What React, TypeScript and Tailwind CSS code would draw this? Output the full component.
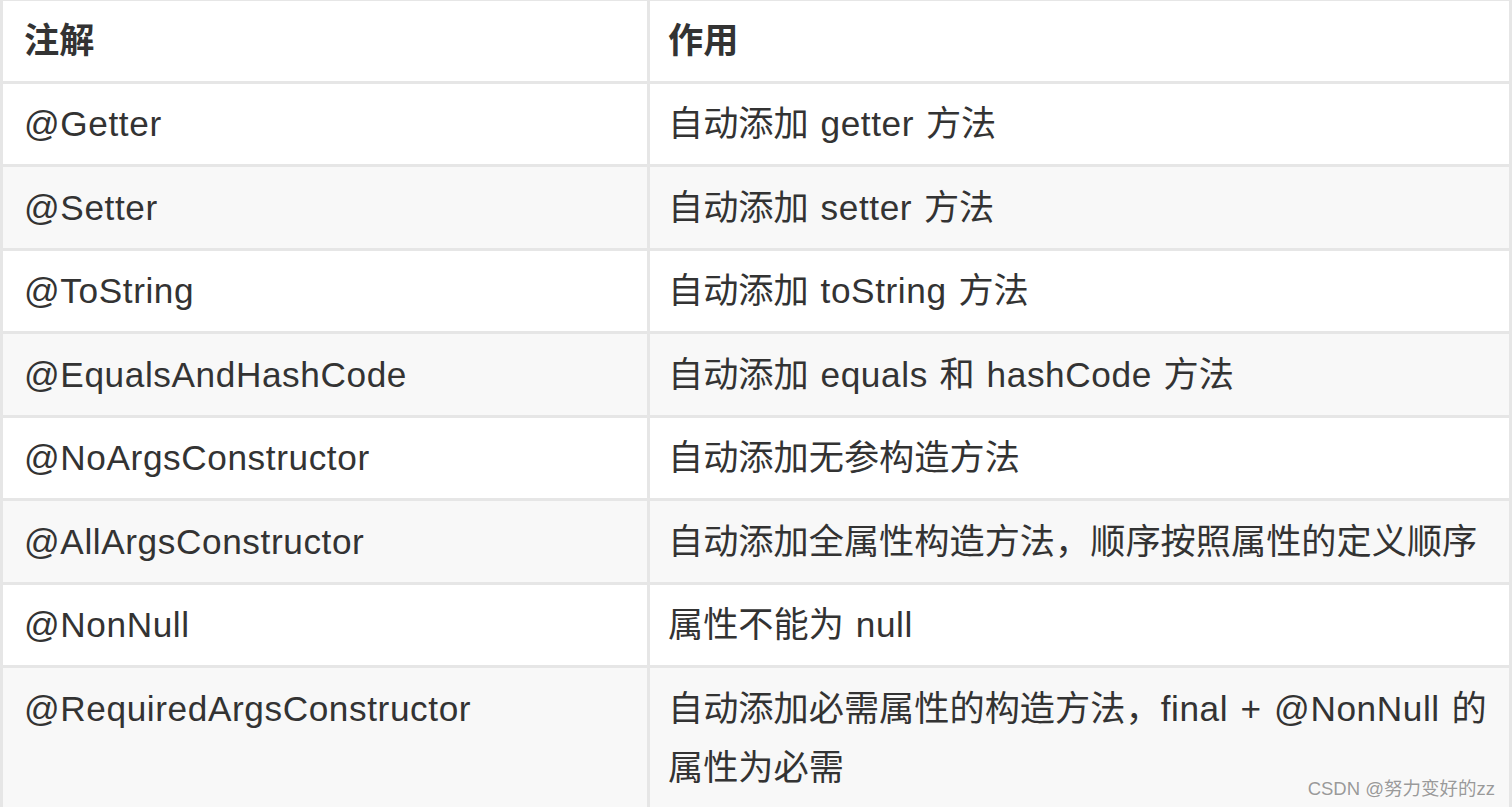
const rows: [string, string[]][] = [
  ["@Getter", ["自动添加 getter 方法"]],
  ["@Setter", ["自动添加 setter 方法"]],
  ["@ToString", ["自动添加 toString 方法"]],
  ["@EqualsAndHashCode", ["自动添加 equals 和 hashCode 方法"]],
  ["@NoArgsConstructor", ["自动添加无参构造方法"]],
  ["@AllArgsConstructor", ["自动添加全属性构造方法，顺序按照属性的定义顺序"]],
  ["@NonNull", ["属性不能为 null"]],
  ["@RequiredArgsConstructor", ["自动添加必需属性的构造方法，final + @NonNull 的", "属性为必需"]],
];

// latin runs get a little tracking so they take the width of the original font
function Mixed({ text }: { text: string }) {
  const parts = text.split(/([A-Za-z@+]+(?: [A-Za-z@+]+)*)/);
  return (
    <>
      {parts.map((p, i) =>
        /[A-Za-z]/.test(p) ? (
          <span key={i} className="tracking-[0.6px]">
            {p}
          </span>
        ) : (
          <span key={i}>{p}</span>
        )
      )}
    </>
  );
}

export default function App() {
  return (
    <div className="relative h-[807px] w-[1512px] overflow-hidden bg-white font-['Liberation_Sans','Noto_Sans_CJK_SC',sans-serif] text-[35.2px] leading-[59.5px] text-[#333]">
      <table className="w-[1512px] table-fixed border-collapse border-t border-[#e6e6e6]">
        <colgroup>
          <col className="w-[647px]" />
          <col />
        </colgroup>
        <thead>
          <tr className="bg-white">
            <th className="border-[3px] border-t-[1px] border-[#e6e6e6] px-[21px] py-[10px] text-left font-bold">注解</th>
            <th className="border-[3px] border-t-[1px] border-[#e6e6e6] pl-[18px] pr-[21px] py-[10px] text-left font-bold">作用</th>
          </tr>
        </thead>
        <tbody>
          {rows.map(([name, desc], i) => (
            <tr key={name} className={i % 2 === 1 ? "bg-[#f8f8f8]" : "bg-white"}>
              <td className="border-[3px] border-[#e6e6e6] px-[21px] py-[10.5px] align-top tracking-[0.6px]">{name}</td>
              <td className="border-[3px] border-[#e6e6e6] pl-[18px] pr-[21px] py-[10.5px] align-top [word-spacing:2px]">
                {desc.map((line) => (
                  <div key={line} className="whitespace-nowrap">
                    <Mixed text={line} />
                  </div>
                ))}
              </td>
            </tr>
          ))}
        </tbody>
      </table>
      <div className="absolute bottom-[9px] right-[17px] text-[18.5px] leading-none text-[#9a9a9a] [text-shadow:0_0_2px_#fff]">
        CSDN @努力变好的zz
      </div>
    </div>
  );
}
